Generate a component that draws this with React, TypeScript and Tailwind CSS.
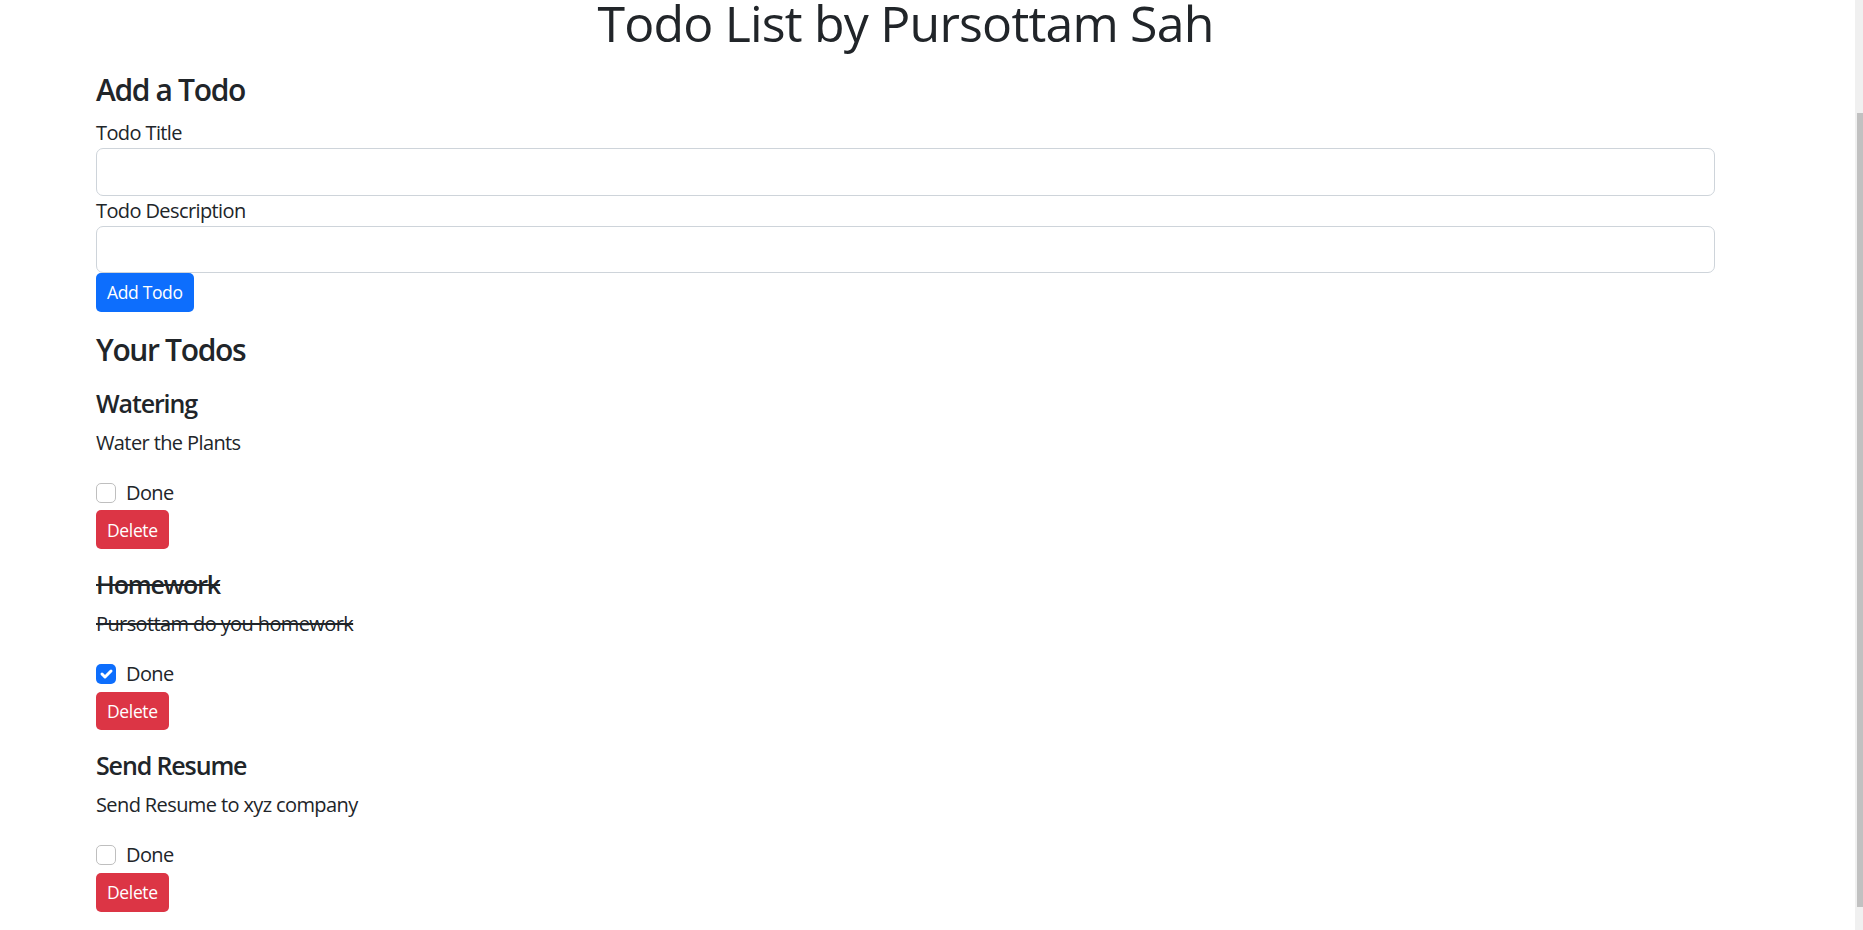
import { useState } from "react";

type Todo = {
  sno: number;
  title: string;
  desc: string;
  done: boolean;
};

const initialTodos: Todo[] = [
  { sno: 1, title: "Watering", desc: "Water the Plants", done: false },
  { sno: 2, title: "Homework", desc: "Pursottam do you homework", done: true },
  { sno: 3, title: "Send Resume", desc: "Send Resume to xyz company", done: false },
];

const CheckMark = () => (
  <svg viewBox="0 0 20 20" className="w-[20px] h-[20px]">
    <path
      d="m6 10 3 3 6-6"
      fill="none"
      stroke="#fff"
      strokeLinecap="round"
      strokeLinejoin="round"
      strokeWidth="3"
    />
  </svg>
);

const TodoItem: React.FC<{
  todo: Todo;
  onToggle: (sno: number) => void;
  onDelete: (sno: number) => void;
}> = ({ todo, onToggle, onDelete }) => {
  const strike = todo.done ? "line-through" : "";
  return (
    <div className="py-[10px]">
      <h5
        className={`text-[25px] leading-[30px] font-semibold tracking-[-0.045em] mb-[10px] ${strike}`}
      >
        {todo.title}
      </h5>
      <p className={`text-[20px] leading-[30px] mb-[20px] ${strike}`}>{todo.desc}</p>
      <label className="flex items-start gap-[10px] mb-[2.5px] cursor-pointer">
        <span
          onClick={() => onToggle(todo.sno)}
          className={
            todo.done
              ? "mt-[5px] w-[20px] h-[20px] rounded-[5px] bg-[#0d6efd] flex"
              : "mt-[5px] w-[20px] h-[20px] rounded-[5px] border border-[#bfbfbf] bg-white flex"
          }
        >
          {todo.done && <CheckMark />}
        </span>
        <span className="text-[20px] leading-[30px]">Done</span>
      </label>
      <button
        onClick={() => onDelete(todo.sno)}
        className="bg-[#dc3545] text-white text-[17.5px] leading-[26.25px] py-[6.25px] px-[11px] rounded-[5px] tracking-[-0.02em]"
      >
        Delete
      </button>
    </div>
  );
};

export default function App() {
  const [todos, setTodos] = useState<Todo[]>(initialTodos);

  const toggle = (sno: number) =>
    setTodos(todos.map((t) => (t.sno === sno ? { ...t, done: !t.done } : t)));
  const remove = (sno: number) => setTodos(todos.filter((t) => t.sno !== sno));

  return (
    <div
      className="h-screen overflow-hidden flex bg-white text-[#212529] tracking-[-0.038em]"
      style={{ fontFamily: '"Open Sans", "Noto Sans", sans-serif' }}
    >
      <div className="flex-1 pl-[96px] pr-[140px]">
        <h1 className="text-center text-[50px] leading-[46px] font-normal tracking-[-0.016em]">
          Todo List by Pursottam Sah
        </h1>

        <div className="mt-[26px] mb-[20px]">
          <h4 className="text-[30px] leading-[36px] font-semibold tracking-[-0.045em] mb-[10px]">
            Add a Todo
          </h4>
          <label className="block text-[20px] leading-[30px]">Todo Title</label>
          <input
            type="text"
            className="block w-full h-[47.5px] border border-[#ced4da] rounded-[7px] px-[15px] text-[20px] outline-none"
          />
          <label className="block text-[20px] leading-[30px]">Todo Description</label>
          <input
            type="text"
            className="block w-full h-[47.5px] border border-[#ced4da] rounded-[7px] px-[15px] text-[20px] outline-none"
          />
          <button className="bg-[#0d6efd] text-white text-[17.5px] leading-[26.25px] py-[6.25px] px-[11px] rounded-[5px] tracking-[-0.02em]">
            Add Todo
          </button>
        </div>

        <h4 className="text-[30px] leading-[36px] font-semibold tracking-[-0.045em] mb-[10px]">
          Your Todos
        </h4>
        {todos.length === 0 ? (
          <p className="text-[20px] leading-[30px]">No Todos to display</p>
        ) : (
          todos.map((todo) => (
            <TodoItem key={todo.sno} todo={todo} onToggle={toggle} onDelete={remove} />
          ))
        )}
      </div>

      {/* browser scrollbar, cut off at the right edge */}
      <div className="w-[8px] bg-[#f0f0f0] flex flex-col">
        <div className="mt-[113px] ml-[2px] h-[794px] bg-[#c1c1c1]" />
      </div>
    </div>
  );
}
